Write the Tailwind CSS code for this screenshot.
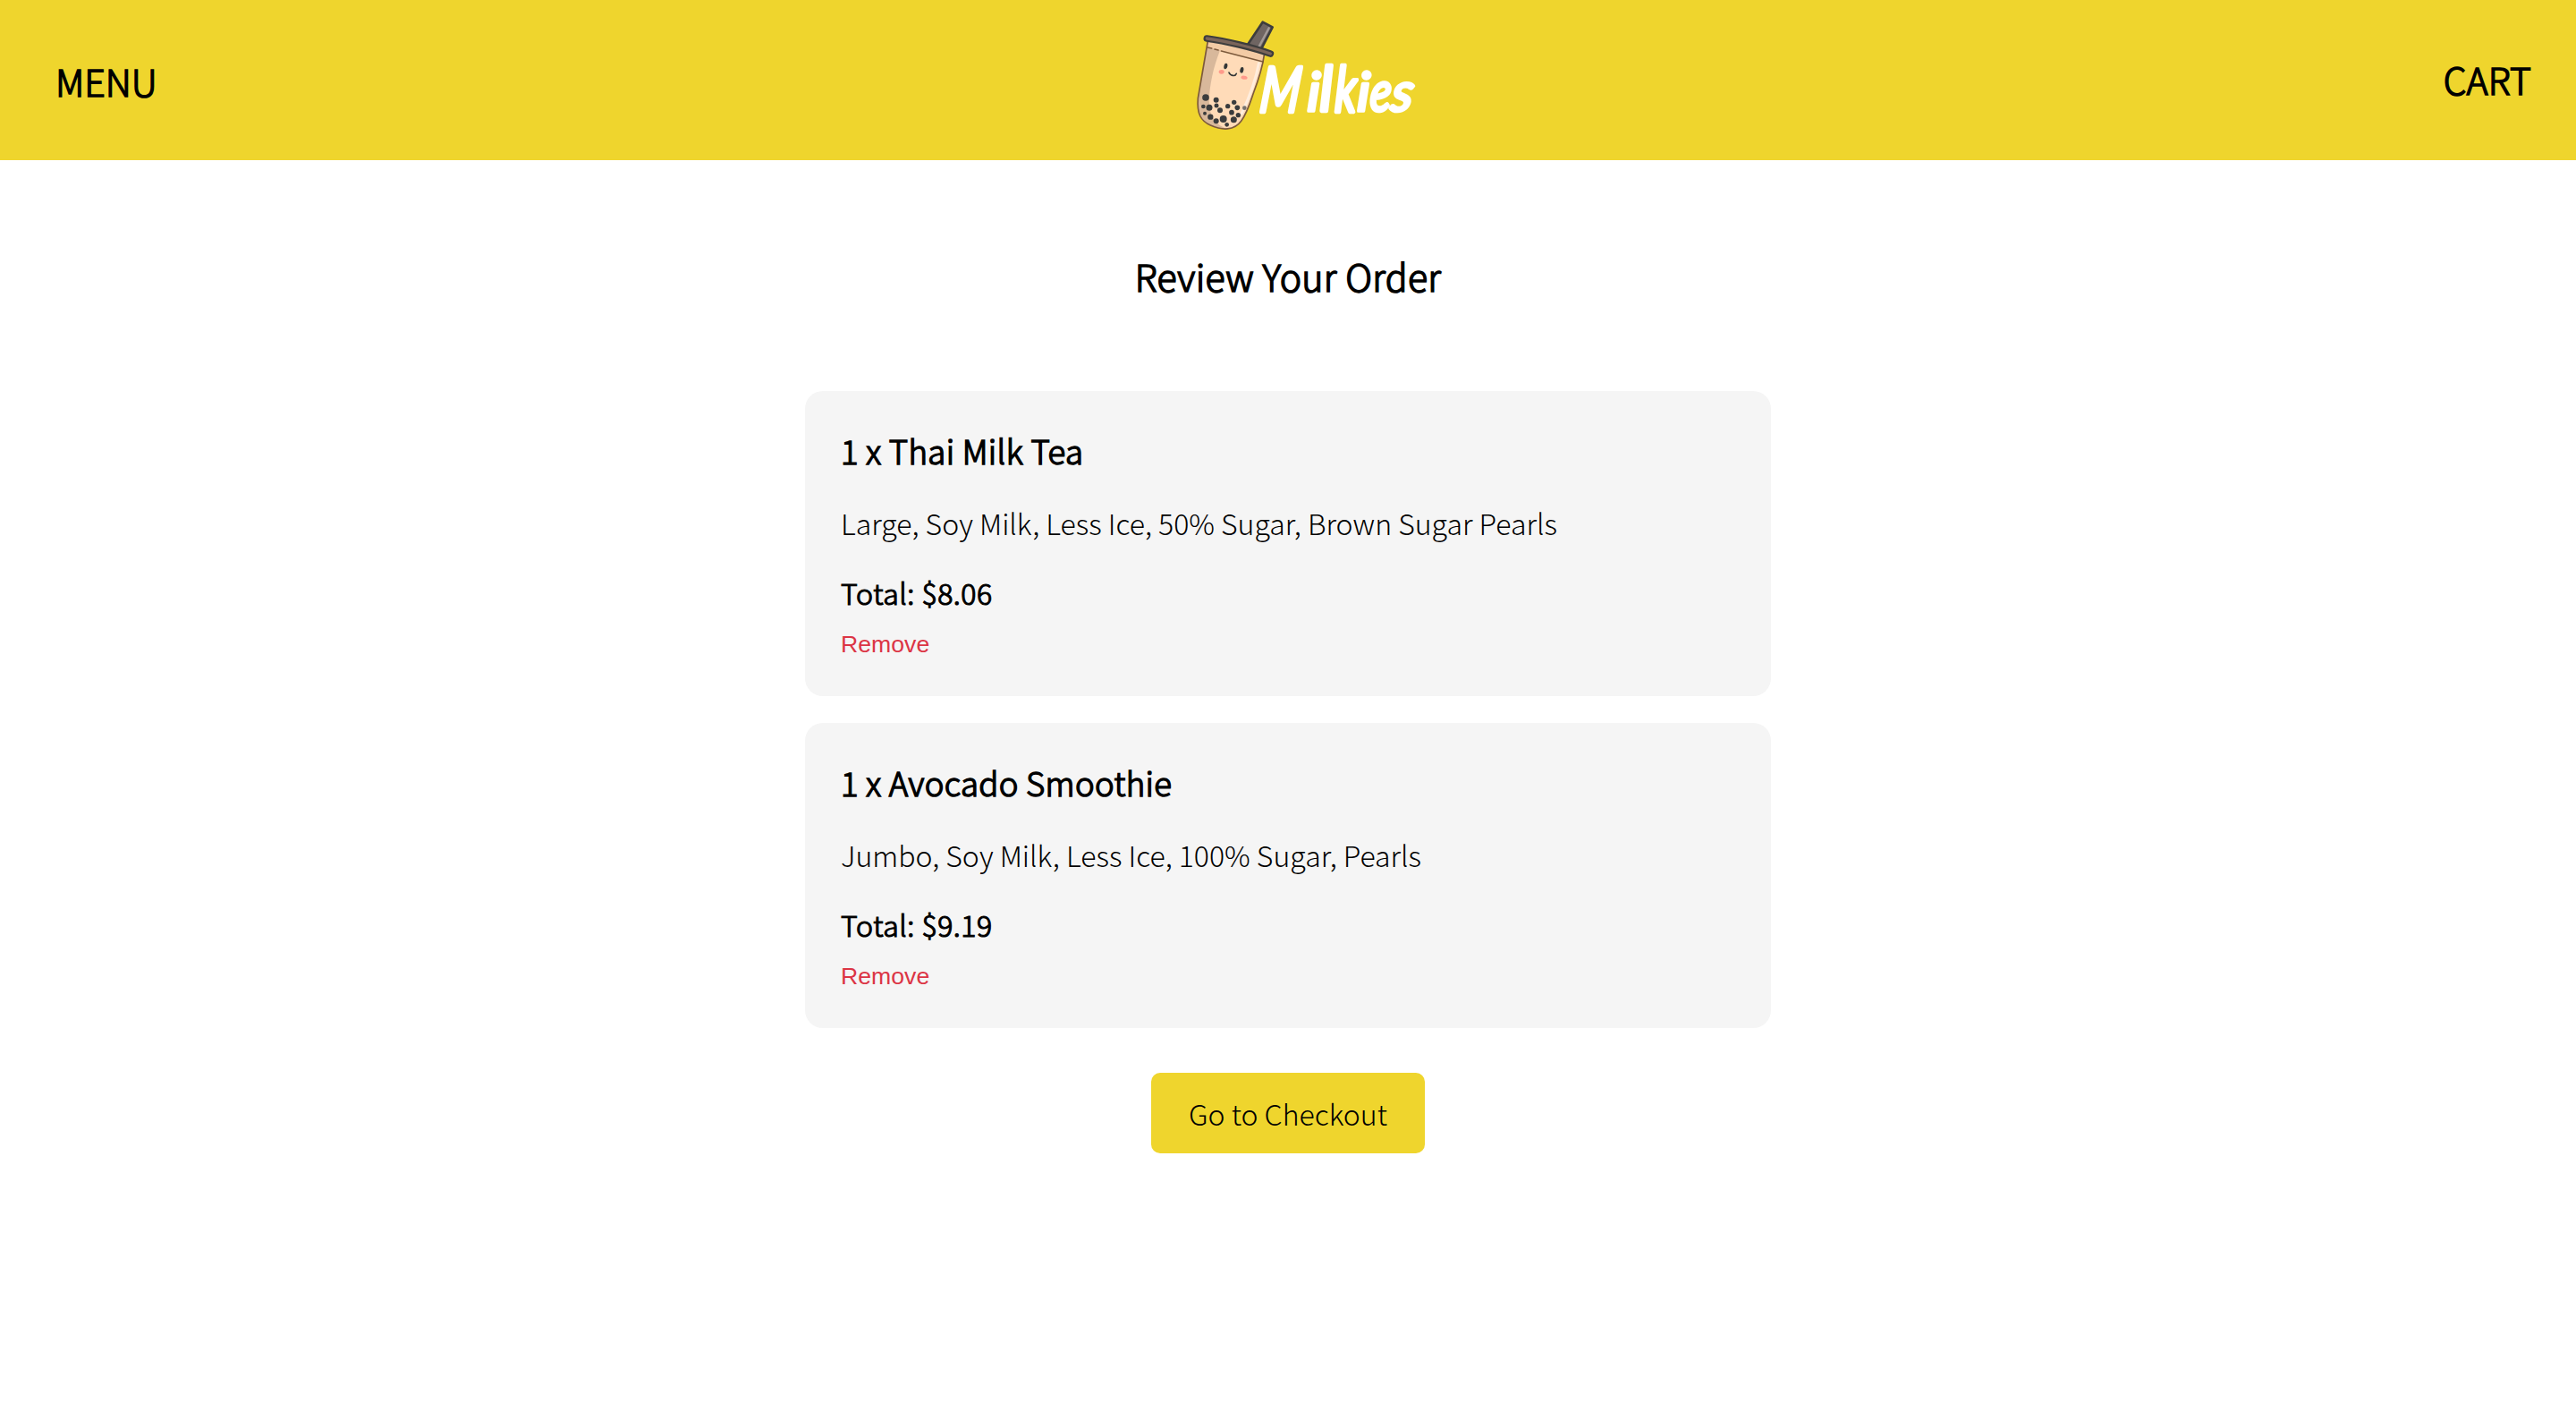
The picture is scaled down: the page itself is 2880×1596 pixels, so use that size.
<!DOCTYPE html>
<html lang="en">
<head>
<meta charset="utf-8">
<title>Milkies</title>
<script src="https://cdn.jsdelivr.net/npm/@tailwindcss/browser@4"></script>
</head>
<body class="min-h-screen bg-white font-['Noto_Sans_CJK_SC','Noto_Sans',sans-serif] font-light text-black">
<header class="flex h-[179px] items-start justify-between bg-[#efd52d] pr-[50px] pl-[62px]">
  <a class="w-[400px] pt-[60px] text-[41px] leading-[60px] [-webkit-text-stroke:1.5px_black]">MENU</a>
  <svg class="mt-[10px] ml-[28px] h-[150px] w-[280px]" viewBox="0 0 840 450" fill="none" stroke-linecap="round" stroke-linejoin="round">
    <!-- straw -->
    <path d="M275 44L308 61L270 135L223 122Z" fill="#6f6562" stroke="#3d3d3d" stroke-width="8"/>
    <path d="M296 64L262 128" stroke="#a39a97" stroke-width="7"/>
    <!-- cup -->
    <path d="M91 108L58 300C54 352 68 376 100 390C140 408 180 408 203 376C222 350 232 318 243 285C262 235 274 200 280 150L190 120Z" fill="#ffdbb8"/>
    <path d="M91 108L58 300C54 352 68 376 100 390C122 399 142 403 156 402C108 384 92 350 96 290C102 230 114 180 140 120Z" fill="#d8b89b"/>
    <path d="M262 182C252 240 228 300 205 350" stroke="#ffeddd" stroke-width="9"/>
    <path d="M92 112L190 125L279 150L277 176L90 128Z" fill="#f3cba5"/>
    <path d="M91 108L58 300C54 352 68 376 100 390C140 408 180 408 203 376C222 350 232 318 243 285C262 235 274 200 280 155" stroke="#7d5a3c" stroke-width="5"/>
    <path d="M90 129L104 132M114 135L126 138M136 141L276 177" stroke="#7d5a3c" stroke-width="5"/>
    <!-- lid -->
    <path d="M88 99C150 107 245 130 301 150" stroke="#3d3d3d" stroke-width="23"/>
    <path d="M88 99C150 107 245 130 301 150" stroke="#7b655a" stroke-width="10"/>
    <!-- face -->
    <g fill="#333737">
      <ellipse cx="151" cy="192" rx="6" ry="10" transform="rotate(10 151 192)"/>
      <ellipse cx="205" cy="205" rx="6" ry="10" transform="rotate(10 205 205)"/>
    </g>
    <path d="M162 213C166 224 183 228 187 217" stroke="#333737" stroke-width="5"/>
    <g fill="#ff9a8b">
      <ellipse cx="137" cy="211" rx="9" ry="7"/>
      <ellipse cx="213" cy="230" rx="11" ry="6" transform="rotate(8 213 230)"/>
    </g>
    <!-- pearls -->
    <g fill="#3a3c3d">
      <circle cx="84" cy="297" r="11.500"/><circle cx="119" cy="305" r="9"/><circle cx="76" cy="327" r="7"/>
      <circle cx="96" cy="331" r="10.500"/><circle cx="120" cy="324" r="7.500"/><circle cx="132" cy="340" r="9"/>
      <circle cx="158" cy="326" r="8"/><circle cx="179" cy="313" r="8"/><circle cx="190" cy="331" r="8.500"/>
      <circle cx="171" cy="347" r="8.500"/><circle cx="193" cy="356" r="8"/><circle cx="81" cy="350" r="6"/>
      <circle cx="100" cy="362" r="9.500"/><circle cx="119" cy="376" r="9"/><circle cx="143" cy="369" r="12"/>
      <circle cx="178" cy="371" r="10.500"/><circle cx="155" cy="388" r="7"/><circle cx="214" cy="332" r="7" fill="#77726e"/>
    </g>
    <!-- wordmark -->
    <g class="font-['Lato',sans-serif] font-normal italic" fill="#fff" stroke="#fff" stroke-width="12" font-size="196">
      <text transform="translate(261 346) skewX(-6) scale(.8 1.07)">M</text>
      <text transform="translate(423 342) skewX(-2) scale(.95 .92)">i</text>
      <text transform="translate(466 342) scale(1 1.07)">l</text>
      <text transform="translate(515 344) skewX(-2) scale(.78 1.08)">k</text>
      <text transform="translate(590 342) skewX(-2) scale(.95 .92)">i</text>
      <text transform="translate(632 341) skewX(-4) scale(.76 .95)">e</text>
      <text transform="translate(701 341) skewX(-8) scale(.92 .93)">s</text>
    </g>
  </svg>
  <a class="w-[400px] pt-[58px] text-right text-[41px] leading-[60px] [-webkit-text-stroke:1.5px_black]">CART</a>
</header>
<main class="flex flex-col items-center">
  <h1 class="mt-[99px] text-[41px] leading-[60px] tracking-[0.300px] [-webkit-text-stroke:1.5px_black]">Review Your Order</h1>
  <section class="mt-[99px] flex w-[1080px] flex-col gap-[30px]">
    <article class="flex h-[341px] flex-col items-start rounded-[20px] bg-[#f5f5f5] px-10 pt-[37px]">
      <h2 class="text-[36.500px] leading-[60px] tracking-[0.350px] [-webkit-text-stroke:1.5px_black]">1 x Thai Milk Tea</h2>
      <p class="mt-5 text-[32px] leading-[60px]">Large, Soy Milk, Less Ice, 50% Sugar, Brown Sugar Pearls</p>
      <p class="mt-[18px] text-[32px] leading-[60px] tracking-[0.550px] [-webkit-text-stroke:1.2px_black]">Total: $8.06</p>
      <button class="mt-3 font-['Liberation_Sans',Arial,sans-serif] text-[26.670px] leading-[32px] font-normal text-[#dc3545]">Remove</button>
    </article>
    <article class="flex h-[341px] flex-col items-start rounded-[20px] bg-[#f5f5f5] px-10 pt-[37px]">
      <h2 class="text-[36.500px] leading-[60px] tracking-[0.350px] [-webkit-text-stroke:1.5px_black]">1 x Avocado Smoothie</h2>
      <p class="mt-5 text-[32px] leading-[60px]">Jumbo, Soy Milk, Less Ice, 100% Sugar, Pearls</p>
      <p class="mt-[18px] text-[32px] leading-[60px] tracking-[0.550px] [-webkit-text-stroke:1.2px_black]">Total: $9.19</p>
      <button class="mt-3 font-['Liberation_Sans',Arial,sans-serif] text-[26.670px] leading-[32px] font-normal text-[#dc3545]">Remove</button>
    </article>
  </section>
  <button class="mt-[50px] flex h-[90px] w-[306px] items-center justify-center rounded-[10px] bg-[#efd52d] text-[32px] leading-[60px]">Go to Checkout</button>
</main>
</body>
</html>
